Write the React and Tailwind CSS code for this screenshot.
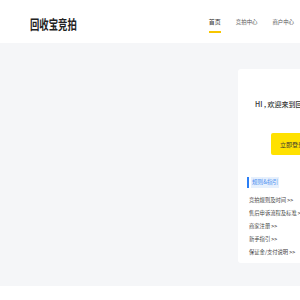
export default function App() {
  const links = [
    "竞拍规则及时间 >>",
    "售后申诉流程及标准 >>",
    "商家注册 >>",
    "新手指引 >>",
    "保证金/支付说明 >>",
  ];
  const font = { fontFamily: '"Noto Sans CJK SC", "Noto Sans", sans-serif' };
  return (
    <div className="w-[300px] h-[300px] overflow-hidden bg-white" style={font}>
      <header className="h-[43px] flex items-center bg-white">
        <div className="pl-[30px] w-[100px]">
          <span className="inline-block origin-left scale-x-[0.72] text-[13px] font-bold text-[#222] leading-none whitespace-nowrap">
            回收宝竞拍
          </span>
        </div>
        <nav className="ml-auto mr-[6px] flex gap-[15px] text-[5.4px] text-[#555] leading-none pt-[7px]">
          <div className="flex flex-col items-center">
            <span className="text-[6px] text-[#333] leading-[8px]">首页</span>
            <span className="mt-[5px] h-[2px] w-full bg-[#f7c600]"></span>
          </div>
          <div className="flex flex-col items-center">
            <span className="leading-[8px]">竞拍中心</span>
            <span className="mt-[5px] h-[2px] w-full bg-transparent"></span>
          </div>
          <div className="flex flex-col items-center">
            <span className="leading-[8px]">商户中心</span>
            <span className="mt-[5px] h-[2px] w-full bg-transparent"></span>
          </div>
        </nav>
      </header>
      <main className="h-[243px] bg-[#f5f6f8] pt-[26px]">
        <div className="ml-[238px] w-[120px] h-[194px] bg-white rounded-[3px] pt-[30px]">
          <div className="pl-[17px] text-[7px] leading-[10px] font-medium text-[#333] whitespace-nowrap">
            HI , 欢迎来到回收宝竞拍
          </div>
          <div className="ml-[33px] mt-[24px] w-[80px] h-[22px] bg-[#ffe100] rounded-[2px] flex items-center pl-[9px] text-[6px] text-[#333] whitespace-nowrap">
            立即登录
          </div>
          <div className="ml-[9px] mt-[22px] flex items-center h-[11px]">
            <span className="w-[2px] h-[11px] bg-[#2a7ef5]"></span>
            <span className="ml-[2px] text-[5.6px] leading-[11px] text-[#4d8ff0] bg-[#e6f0fd] px-[1px] whitespace-nowrap">规则&amp;指引</span>
          </div>
          <ul className="ml-[11px] mt-[6px] flex flex-col">
            {links.map((t) => (
              <li key={t} className="text-[5.3px] leading-[13px] text-[#444] whitespace-nowrap">
                {t}
              </li>
            ))}
          </ul>
        </div>
      </main>
    </div>
  );
}
